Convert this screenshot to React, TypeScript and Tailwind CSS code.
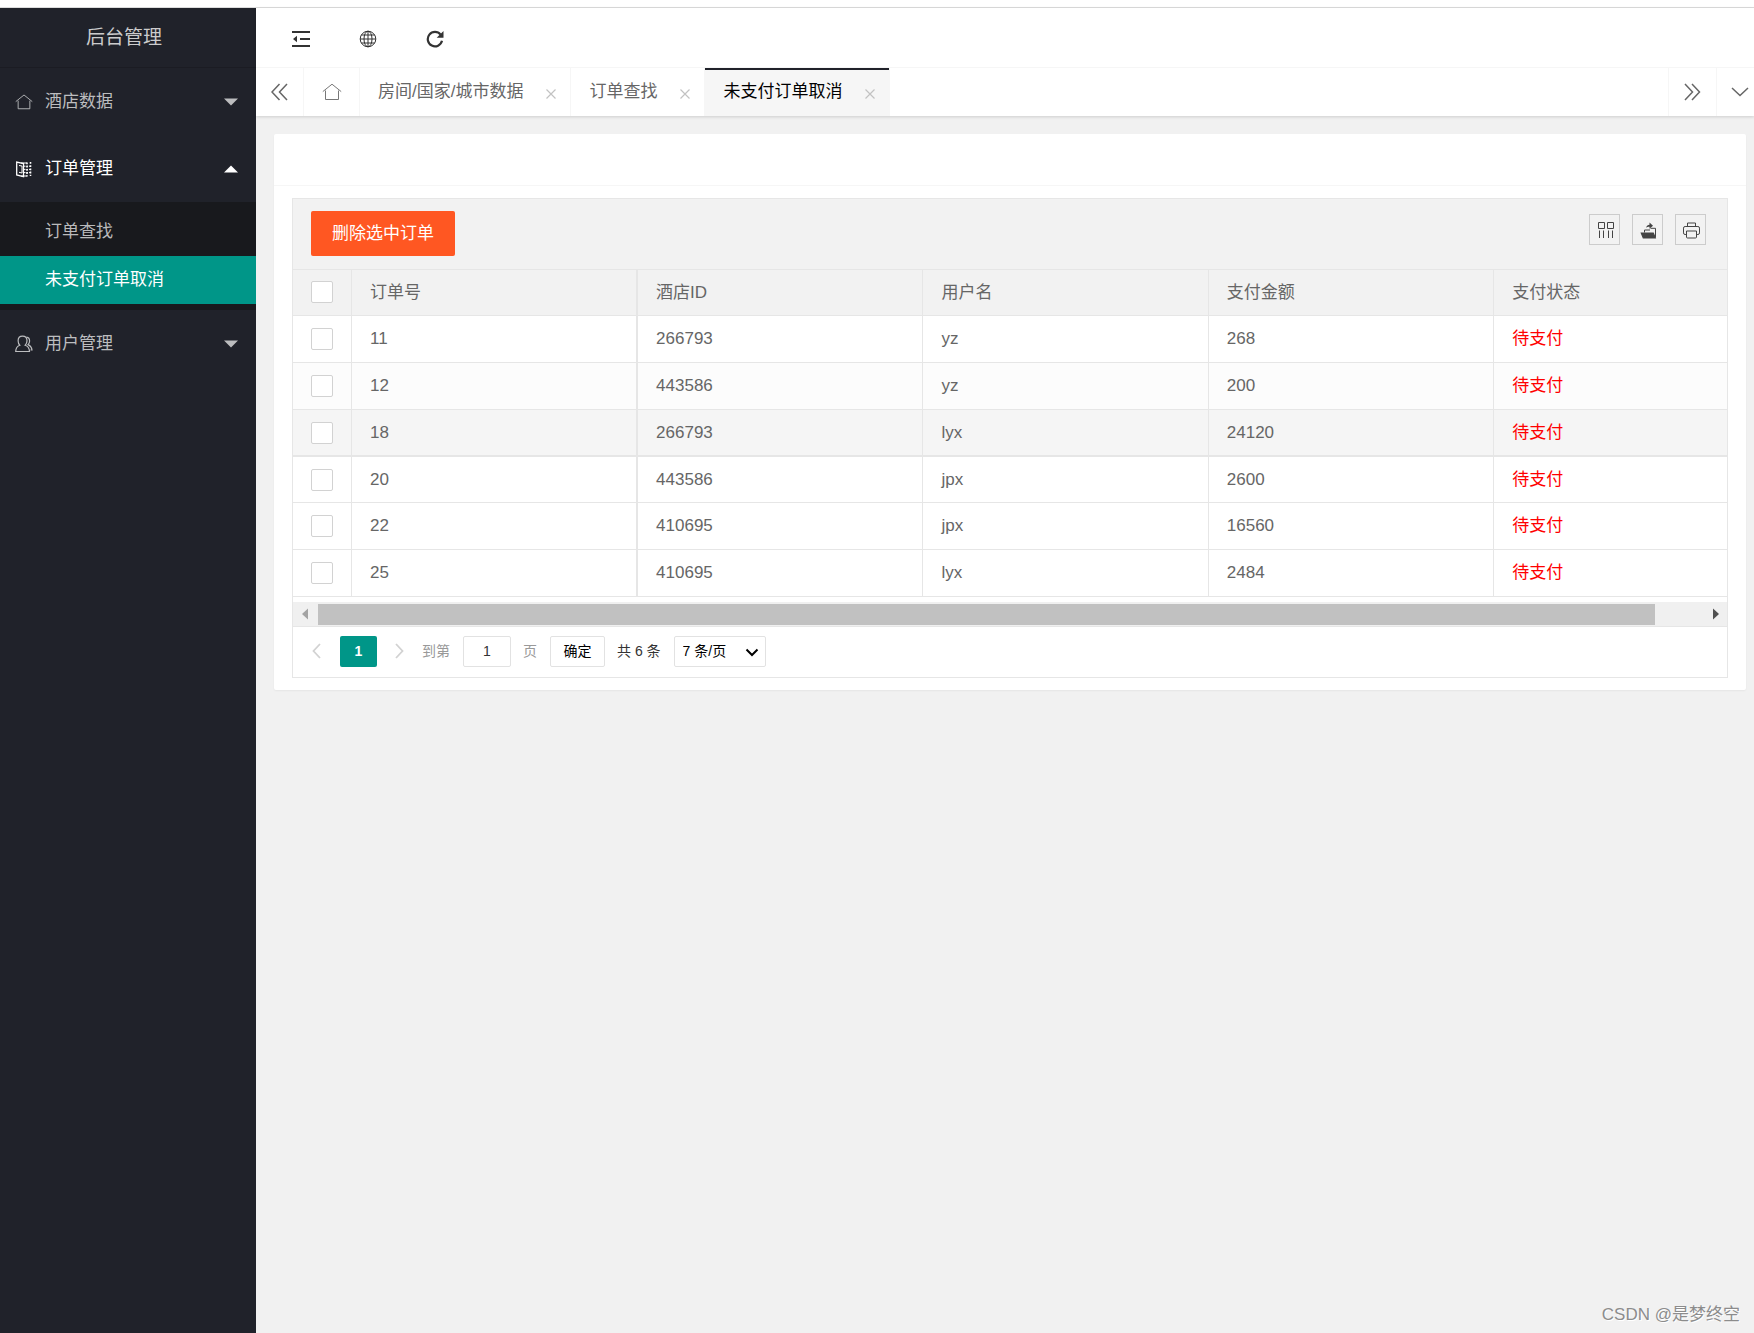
import React from "react";

const cx = (...parts: (string | false)[]) => parts.filter(Boolean).join(" ");

function HomeIcon({ className }: { className: string }) {
  return (
    <svg viewBox="0 0 20 18" className={className} fill="none" stroke="currentColor" strokeWidth="1">
      <path d="M.8 8.600 10 1.200l9.200 7.400" />
      <path d="M3.500 7.500v9h13v-9" />
    </svg>
  );
}

function OrderIcon() {
  return (
    <svg viewBox="0 0 18 18" className="h-[18px] w-[18px]" fill="none" stroke="currentColor" strokeWidth="1.300">
      <path d="M1.700 2v13l6.800 1.600V3.600z" />
      <path d="M4 5.500l3 .5v7l-3-.7" strokeWidth="1" />
      <path d="M6 3h6M6 16h6" strokeWidth="1" />
      <path d="M12 2.500v14M15.500 2v14" strokeWidth="1.600" strokeDasharray="1.800 1.400" />
      <path d="M9 6.200h6M9 9.400h6M9 12.600h6" strokeWidth="1" strokeDasharray="1.500 1" />
    </svg>
  );
}

function UserIcon() {
  return (
    <svg viewBox="0 0 18 18" className="h-[18px] w-[18px]" fill="none" stroke="currentColor" strokeWidth="1.200">
      <path d="M4.800 10.200C3.500 9 3.100 7.600 3.100 5.800 3.100 3 5 1.200 7.500 1.200S12 3 12 5.800c0 1.800-.5 3.200-1.800 4.400 2.300.8 4.200 2.600 4.300 6.300H.7c.1-3.700 1.800-5.500 4.100-6.300z" />
      <path d="M11.500 2.200c2 .3 3.100 1.800 3.100 3.800 0 1.500-.4 2.600-1.500 3.600 2 1 3.600 2.400 3.900 5.400h-1.500" />
    </svg>
  );
}

const Indent = () => (
  <svg viewBox="0 0 18 16" className="h-4 w-[18px]" fill="currentColor">
    <path d="M0 0h18v2H0zM8 7h10v2H8zM0 14h18v2H0zM5 4.800v6.400L1 8z" />
  </svg>
);

const Globe = () => (
  <svg viewBox="0 0 18 18" className="h-[18px] w-[18px]" fill="none" stroke="currentColor" strokeWidth="1">
    <circle cx="9" cy="9" r="7.800" />
    <ellipse cx="9" cy="9" rx="4" ry="7.800" />
    <path d="M9 1.200v15.600M1.200 9h15.600M2.400 5h13.200M2.400 13h13.200" />
  </svg>
);

const Refresh = () => (
  <svg viewBox="0 0 18 18" className="h-[18px] w-[18px]" fill="none" stroke="currentColor" strokeWidth="2.200">
    <path d="M14.600 4.600A7.200 7.200 0 1 0 16 10.800" />
    <path d="M17.500 1v6.800h-6.800z" fill="currentColor" stroke="none" />
  </svg>
);

const DoubleLeft = () => (
  <svg viewBox="0 0 18 18" className="h-[18px] w-[18px]" fill="none" stroke="currentColor" strokeWidth="1.500">
    <path d="M8.500 1 1 9l7.500 8M16 1 8.500 9l7.500 8" />
  </svg>
);

const DoubleRight = () => (
  <svg viewBox="0 0 18 18" className="h-[18px] w-[18px]" fill="none" stroke="currentColor" strokeWidth="1.500">
    <path d="M1 1l7.500 8L1 17M8 1l7.500 8L8 17" />
  </svg>
);

const Down = () => (
  <svg viewBox="0 0 18 10" className="h-[10px] w-[18px]" fill="none" stroke="currentColor" strokeWidth="1.500">
    <path d="m1 1 8 7.500L17 1" />
  </svg>
);

const Cross = () => (
  <svg viewBox="0 0 10 10" className="h-[10px] w-[10px]" fill="none" stroke="currentColor" strokeWidth="1.200">
    <path d="m.5.5 9 9M9.500.5l-9 9" />
  </svg>
);

const ColumnsIcon = () => (
  <svg viewBox="0 0 18 18" className="h-[18px] w-[18px]" fill="none" stroke="currentColor" strokeWidth="1">
    <path d="M2.500 1.500h6v6h-6zM11.500 1.500h6v6h-6zM3.500 9.500V17M7.500 9.500V17M12.500 9.500V17M16.500 9.500V17" />
  </svg>
);

const ExportIcon = () => (
  <svg viewBox="0 0 18 18" className="h-[18px] w-[18px]" fill="none" stroke="currentColor" strokeWidth="1.200">
    <path d="M2.300 12h12l2 5H4.300z" fill="currentColor" />
    <path d="M5.500 11.500V9h5.500M11.500 7.300h5V16.500" strokeWidth="1" />
    <path d="M7 6.800C7.500 4.800 9 3.800 10.500 3.800V1.500L14 4.700l-3.500 3V5.800c-1.300 0-2.500.2-3.500 1z" fill="currentColor" stroke="none" />
  </svg>
);

const PrintIcon = () => (
  <svg viewBox="0 0 18 18" className="h-[18px] w-[18px]" fill="none" stroke="currentColor" strokeWidth="1">
    <path d="M5.500 5.500V2h8v3.500" />
    <path d="M4.500 13.500H3.100a1.600 1.600 0 0 1-1.600-1.600V7.100A1.600 1.600 0 0 1 3.100 5.500h12.800a1.600 1.600 0 0 1 1.600 1.600v4.800a1.600 1.600 0 0 1-1.600 1.600h-1.400" />
    <path d="M4.500 10h10v6a1 1 0 0 1-1 1h-8a1 1 0 0 1-1-1z" />
  </svg>
);

const Chevron = ({ d }: { d: string }) => (
  <svg viewBox="0 0 9 16" className="h-4 w-[9px]" fill="none" stroke="currentColor" strokeWidth="1.800">
    <path d={d} />
  </svg>
);

function Triangle({ d, className }: { d: string; className: string }) {
  return (
    <svg viewBox="0 0 14 14" className={className} fill="currentColor">
      <path d={d} />
    </svg>
  );
}

function MenuGroup({ icon, label, open }: { icon: React.ReactNode; label: string; open?: boolean }) {
  return (
    <button
      type="button"
      aria-expanded={!!open}
      className={cx("flex h-[67px] w-full items-center pr-[18px] pl-[15px] text-left", open ? "text-white" : "text-[#bcbdbf]")}
    >
      <span className="flex w-[30px]">{icon}</span>
      <span className="flex-1">{label}</span>
      <Triangle className="h-3.5 w-3.5" d={open ? "M0 10.500 7 3.500l7 7z" : "M0 3.500h14l-7 7z"} />
    </button>
  );
}

function Sidebar() {
  return (
    <aside className="w-64 shrink-0 bg-[#20222a]">
      <div className="flex h-[60px] items-center justify-center border-b border-[#1b1c23] pr-2 text-[19px] text-[#cccccd]">
        后台管理
      </div>
      <nav>
        <MenuGroup icon={<HomeIcon className="h-[18px] w-[18px]" />} label="酒店数据" />
        <MenuGroup icon={<OrderIcon />} label="订单管理" open />
        <div className="bg-[#18191d] py-1.5">
          <a href="#search" className="flex h-12 items-center pl-[45px] text-[#bababb]">订单查找</a>
          <a href="#unpaid" className="flex h-12 items-center bg-[#009688] pl-[45px] text-white">未支付订单取消</a>
        </div>
        <MenuGroup icon={<UserIcon />} label="用户管理" />
      </nav>
    </aside>
  );
}

function Tab({ label, active }: { label: string; active?: boolean }) {
  return (
    <div className={cx("relative flex items-center border-r border-[#f6f6f6] pr-[9px] pl-[18px]", !!active && "bg-[#f6f6f6] text-black")}>
      {active && <span className="absolute inset-x-0 top-0 h-0.5 bg-[#20222a]" />}
      <a href="#tab" className="whitespace-nowrap">{label}</a>
      <button type="button" aria-label={"关闭" + label} className="mt-1 ml-[18px] flex h-5 w-5 items-center justify-center text-[#c2c2c2]">
        <Cross />
      </button>
    </div>
  );
}

function Header() {
  return (
    <header className="relative shadow-[0_1px_3px_rgba(0,0,0,0.15)]">
      <div className="flex h-[60px] items-center gap-[49px] border-b border-[#f6f6f6] bg-white pt-0.5 pl-9 text-[#333]">
        <button type="button" aria-label="收起菜单"><Indent /></button>
        <button type="button" aria-label="前台"><Globe /></button>
        <button type="button" aria-label="刷新"><Refresh /></button>
      </div>
      <div className="flex h-12 bg-white text-[#666]">
        <button type="button" aria-label="向左" className="flex w-12 items-center justify-center border-r border-[#f6f6f6]"><DoubleLeft /></button>
        <button type="button" aria-label="主页" className="flex w-14 items-center justify-center border-r border-[#f6f6f6] text-[#777]">
          <HomeIcon className="h-[18px] w-5" />
        </button>
        <Tab label="房间/国家/城市数据" />
        <Tab label="订单查找" />
        <Tab label="未支付订单取消" active />
        <button type="button" aria-label="向右" className="ml-auto flex w-12 items-center justify-center border-l border-[#f6f6f6]"><DoubleRight /></button>
        <button type="button" aria-label="更多" className="flex w-[38px] items-center border-l border-[#f6f6f6] pl-[14px]"><Down /></button>
      </div>
    </header>
  );
}

const orders = [
  ["11", "266793", "yz", "268"],
  ["12", "443586", "yz", "200"],
  ["18", "266793", "lyx", "24120"],
  ["20", "443586", "jpx", "2600"],
  ["22", "410695", "jpx", "16560"],
  ["25", "410695", "lyx", "2484"],
];

function Check({ label }: { label: string }) {
  return (
    <input
      type="checkbox"
      aria-label={label}
      className="block h-[22px] w-[22px] appearance-none rounded-xs border border-[#d2d2d2] bg-white checked:bg-[#009688]"
    />
  );
}

function OrderTable() {
  const base = "border-[#e6e6e6] px-[18px] pt-0 text-left font-normal";
  return (
    <table className="w-full table-fixed border-separate border-spacing-0">
      <colgroup>
        <col className="w-[59px]" />
        <col className="w-[19.950%]" />
        <col className="w-[19.9%]" />
        <col className="w-[19.9%]" />
        <col className="w-[19.9%]" />
        <col />
      </colgroup>
      <thead>
        <tr className="h-[46px] bg-[#f2f2f2]">
          <th className={cx(base, "border-r border-b pb-0.5")}><Check label="全选" /></th>
          <th className={cx(base, "border-r-2 border-b")}>订单号</th>
          <th className={cx(base, "border-r border-b")}>酒店ID</th>
          <th className={cx(base, "border-r border-b")}>用户名</th>
          <th className={cx(base, "border-r border-b")}>支付金额</th>
          <th className={cx(base, "border-b")}>支付状态</th>
        </tr>
      </thead>
      <tbody>
        {orders.map((row, i) => {
          const cell = cx(base, i === 2 ? "border-b-2" : "border-b");
          return (
            <tr key={row[0]} className={cx(i === 3 ? "h-[46px]" : "h-[47px]", i === 1 && "bg-[#fcfcfc]", i === 2 && "bg-[#f5f5f5]")}>
              <td className={cx(cell, "border-r")}><Check label={"选择订单 " + row[0]} /></td>
              <td className={cx(cell, "border-r-2")}>{row[0]}</td>
              <td className={cx(cell, "border-r")}>{row[1]}</td>
              <td className={cx(cell, "border-r")}>{row[2]}</td>
              <td className={cx(cell, "border-r")}>{row[3]}</td>
              <td className={cx(cell, "text-[#ff0000]")}>待支付</td>
            </tr>
          );
        })}
      </tbody>
    </table>
  );
}

function ScrollBar() {
  return (
    <div className="mt-[5px] flex h-[25px] items-center border-b border-[#e6e6e6] bg-[#f0f0f0]">
      <button type="button" aria-label="向左滚动" className="flex w-[25px] justify-center text-[#a3a3a3]">
        <Triangle className="h-3.5 w-3.5" d="M9 1.500v11L3 7z" />
      </button>
      <div className="flex-1">
        <div className="h-[21px] w-[96.5%] bg-[#c1c1c1]" />
      </div>
      <button type="button" aria-label="向右滚动" className="flex w-6 justify-center text-[#505050]">
        <Triangle className="h-3.5 w-3.5" d="M5 1.500v11L11 7z" />
      </button>
    </div>
  );
}

function Pager() {
  const box = "h-[31px] rounded-xs border border-[#e2e2e2] bg-white";
  return (
    <div className="flex h-[50px] items-center pb-0.5 text-sm text-[#333]">
      <button type="button" aria-label="上一页" className="ml-[19px] flex text-[#d2d2d2]"><Chevron d="M8 1 1.500 8 8 15" /></button>
      <button type="button" className="ml-[19px] h-[31px] w-[37px] rounded-xs bg-[#009688] font-bold text-white">1</button>
      <button type="button" aria-label="下一页" className="ml-[18px] flex text-[#d2d2d2]"><Chevron d="m1 1 6.500 7L1 15" /></button>
      <label htmlFor="page" className="ml-[18px] text-[#999]">到第</label>
      <input id="page" defaultValue="1" className={cx(box, "ml-[13px] w-12 text-center")} />
      <span className="ml-3 text-[#999]">页</span>
      <button type="button" className={cx(box, "ml-[13px] w-[55px] text-black")}>确定</button>
      <span className="ml-3">共 6 条</span>
      <div className="relative ml-[13px] text-black">
        <select aria-label="每页条数" className={cx(box, "block w-[92px] appearance-none pl-2")}>
          <option>7 条/页</option>
          <option>14 条/页</option>
          <option>21 条/页</option>
        </select>
        <svg viewBox="0 0 14 9" className="pointer-events-none absolute top-3 right-[7px] h-[9px] w-3.5" fill="none" stroke="currentColor" strokeWidth="2">
          <path d="m1.500 1.500 5.500 5.500 5.500-5.500" />
        </svg>
      </div>
    </div>
  );
}

function Tool({ label, children }: { label: string; children: React.ReactNode }) {
  return (
    <button type="button" aria-label={label} className="flex h-[31px] w-[31px] items-center justify-center border border-[#ccc]">
      {children}
    </button>
  );
}

export default function App() {
  return (
    <div className="flex min-h-screen flex-col bg-[#f1f1f1] font-['Liberation_Sans','Noto_Sans_CJK_SC',sans-serif] text-[17px] leading-6 text-[#666]">
      <div className="h-2 border-b border-[#dcdcdc] bg-white" />
      <div className="flex flex-1">
        <Sidebar />
        <div className="flex min-w-0 flex-1 flex-col">
          <Header />
          <main className="pt-[18px] pr-2 pl-[18px]">
            <section className="rounded-xs bg-white shadow-[0_1px_2px_rgba(0,0,0,0.05)]">
              <div className="h-[52px] border-b border-[#f6f6f6]" />
              <div className="px-[18px] py-3">
                <div className="border border-[#e6e6e6]">
                  <div className="flex items-start justify-between border-b border-[#e6e6e6] bg-[#f2f2f2] pt-3 pr-[21px] pb-[13px] pl-[18px]">
                    <button type="button" className="h-[45px] rounded-xs bg-[#ff5722] px-[21px] text-white">删除选中订单</button>
                    <div className="mt-[3px] flex gap-3 text-[#444]">
                      <Tool label="筛选列"><ColumnsIcon /></Tool>
                      <Tool label="导出"><ExportIcon /></Tool>
                      <Tool label="打印"><PrintIcon /></Tool>
                    </div>
                  </div>
                  <OrderTable />
                  <ScrollBar />
                  <Pager />
                </div>
              </div>
            </section>
          </main>
          <footer className="mt-auto pr-3.5 pb-1.5 text-right text-[#8c8c8c] [text-shadow:1px_1px_0_white]">CSDN @是梦终空</footer>
        </div>
      </div>
    </div>
  );
}
